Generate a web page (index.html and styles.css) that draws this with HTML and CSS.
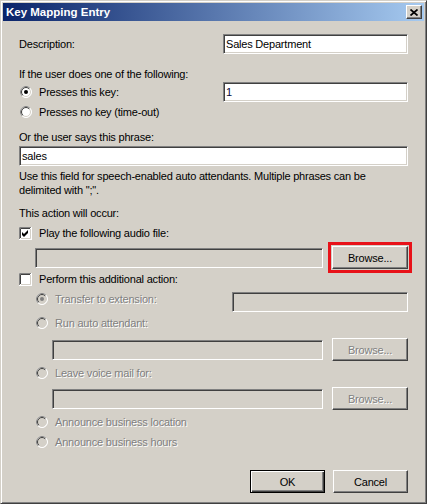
FILE: index.html
```html
<!DOCTYPE html>
<html>
<head>
<meta charset="utf-8">
<link rel="stylesheet" href="styles.css">
</head>
<body>
<div class="window">
  <div class="titlebar">
    <span class="title">Key Mapping Entry</span>
    <div class="close">
      <svg width="8" height="7" viewBox="0 0 8 7"><path d="M0.5 0.5 L7.5 6.5 M7.5 0.5 L0.5 6.5" stroke="#000" stroke-width="1.7" fill="none"/></svg>
    </div>
  </div>
  <div class="content">
    <div class="row r-desc">
      <span class="label">Description:</span>
      <div class="field f-desc">Sales Department</div>
    </div>
    <div class="row r-text r-if"><span class="label">If the user does one of the following:</span></div>
    <div class="row r-key">
      <span class="opt">
        <svg class="radio" width="12" height="12" viewBox="0 0 12 12"><circle cx="6" cy="6" r="5.5" fill="#fff" stroke="#fff"/><path d="M2.1 9.9 A5.5 5.5 0 0 1 9.9 2.1" stroke="#808080" fill="none"/><circle cx="6" cy="6" r="4.5" fill="#fff" stroke="#d4d0c8"/><path d="M2.8 9.2 A4.5 4.5 0 0 1 9.2 2.8" stroke="#404040" fill="none"/><circle cx="6" cy="6" r="2" fill="#000"/></svg>
        <span class="label">Presses this key:</span>
      </span>
      <div class="field f-key">1</div>
    </div>
    <div class="row r-nokey">
      <span class="opt">
        <svg class="radio" width="12" height="12" viewBox="0 0 12 12"><circle cx="6" cy="6" r="5.5" fill="#fff" stroke="#fff"/><path d="M2.1 9.9 A5.5 5.5 0 0 1 9.9 2.1" stroke="#808080" fill="none"/><circle cx="6" cy="6" r="4.5" fill="#fff" stroke="#d4d0c8"/><path d="M2.8 9.2 A4.5 4.5 0 0 1 9.2 2.8" stroke="#404040" fill="none"/></svg>
        <span class="label">Presses no key (time-out)</span>
      </span>
    </div>
    <div class="row r-text r-says"><span class="label">Or the user says this phrase:</span></div>
    <div class="row r-sales"><div class="field f-sales">sales</div></div>
    <div class="help">Use this field for speech-enabled auto attendants. Multiple phrases can be<br>delimited with ";".</div>
    <div class="row r-text r-action"><span class="label">This action will occur:</span></div>
    <div class="row r-text r-play">
      <span class="opt">
        <svg class="check" width="13" height="13" viewBox="0 0 13 13"><rect x="0" y="0" width="13" height="13" fill="#fff"/><path d="M0.5 12 V0.5 H12" stroke="#808080" fill="none"/><path d="M1.5 11 V1.5 H11" stroke="#404040" fill="none"/><path d="M1 12.5 H12.5 V1" stroke="#fff" fill="none"/><path d="M2 11.5 H11.5 V2" stroke="#d4d0c8" fill="none"/><polygon points="3,5 5,7 9,3 9,6 5,10 3,8" fill="#000"/></svg>
        <span class="label">Play the following audio file:</span>
      </span>
    </div>
    <div class="row r-audio">
      <div class="field dis f-audio"></div>
      <div class="highlight"><div class="btn b-browse">Browse...</div></div>
    </div>
    <div class="row r-text r-perform">
      <span class="opt">
        <svg class="check" width="13" height="13" viewBox="0 0 13 13"><rect x="0" y="0" width="13" height="13" fill="#fff"/><path d="M0.5 12 V0.5 H12" stroke="#808080" fill="none"/><path d="M1.5 11 V1.5 H11" stroke="#404040" fill="none"/><path d="M1 12.5 H12.5 V1" stroke="#fff" fill="none"/><path d="M2 11.5 H11.5 V2" stroke="#d4d0c8" fill="none"/></svg>
        <span class="label">Perform this additional action:</span>
      </span>
    </div>
    <div class="row r-transfer">
      <span class="opt">
        <svg class="radio" width="12" height="12" viewBox="0 0 12 12"><circle cx="6" cy="6" r="5.5" fill="#fff" stroke="#fff"/><path d="M2.1 9.9 A5.5 5.5 0 0 1 9.9 2.1" stroke="#808080" fill="none"/><circle cx="6" cy="6" r="4.5" fill="#d4d0c8" stroke="#d4d0c8"/><path d="M2.8 9.2 A4.5 4.5 0 0 1 9.2 2.8" stroke="#404040" fill="none"/><circle cx="6" cy="6" r="2" fill="#808080"/></svg>
        <span class="label dim">Transfer to extension:</span>
      </span>
      <div class="field dis f-transfer"></div>
    </div>
    <div class="row r-text r-runaa">
      <span class="opt">
        <svg class="radio" width="12" height="12" viewBox="0 0 12 12"><circle cx="6" cy="6" r="5.5" fill="#fff" stroke="#fff"/><path d="M2.1 9.9 A5.5 5.5 0 0 1 9.9 2.1" stroke="#808080" fill="none"/><circle cx="6" cy="6" r="4.5" fill="#d4d0c8" stroke="#d4d0c8"/><path d="M2.8 9.2 A4.5 4.5 0 0 1 9.2 2.8" stroke="#404040" fill="none"/></svg>
        <span class="label dim">Run auto attendant:</span>
      </span>
    </div>
    <div class="row r-browse r-aa">
      <div class="field dis f-sub"></div>
      <div class="btn b-sub dim">Browse...</div>
    </div>
    <div class="row r-text r-vm">
      <span class="opt">
        <svg class="radio" width="12" height="12" viewBox="0 0 12 12"><circle cx="6" cy="6" r="5.5" fill="#fff" stroke="#fff"/><path d="M2.1 9.9 A5.5 5.5 0 0 1 9.9 2.1" stroke="#808080" fill="none"/><circle cx="6" cy="6" r="4.5" fill="#d4d0c8" stroke="#d4d0c8"/><path d="M2.8 9.2 A4.5 4.5 0 0 1 9.2 2.8" stroke="#404040" fill="none"/></svg>
        <span class="label dim">Leave voice mail for:</span>
      </span>
    </div>
    <div class="row r-browse r-vmin">
      <div class="field dis f-sub"></div>
      <div class="btn b-sub dim">Browse...</div>
    </div>
    <div class="row r-text r-loc">
      <span class="opt">
        <svg class="radio" width="12" height="12" viewBox="0 0 12 12"><circle cx="6" cy="6" r="5.5" fill="#fff" stroke="#fff"/><path d="M2.1 9.9 A5.5 5.5 0 0 1 9.9 2.1" stroke="#808080" fill="none"/><circle cx="6" cy="6" r="4.5" fill="#d4d0c8" stroke="#d4d0c8"/><path d="M2.8 9.2 A4.5 4.5 0 0 1 9.2 2.8" stroke="#404040" fill="none"/></svg>
        <span class="label dim">Announce business location</span>
      </span>
    </div>
    <div class="row r-text r-hours">
      <span class="opt">
        <svg class="radio" width="12" height="12" viewBox="0 0 12 12"><circle cx="6" cy="6" r="5.5" fill="#fff" stroke="#fff"/><path d="M2.1 9.9 A5.5 5.5 0 0 1 9.9 2.1" stroke="#808080" fill="none"/><circle cx="6" cy="6" r="4.5" fill="#d4d0c8" stroke="#d4d0c8"/><path d="M2.8 9.2 A4.5 4.5 0 0 1 9.2 2.8" stroke="#404040" fill="none"/></svg>
        <span class="label dim">Announce business hours</span>
      </span>
    </div>
    <div class="row r-buttons">
      <div class="btn b-ok">OK</div>
      <div class="btn b-cancel">Cancel</div>
    </div>
  </div>
</div>
</body>
</html>
```
FILE: styles.css
```css
html, body {
  margin: 0;
  padding: 0;
  background: #d4d0c8;
}
body {
  font-family: "Liberation Sans", Arial, sans-serif;
  font-size: 11px;
  letter-spacing: -0.2px;
  color: #000;
}
.window {
  width: 427px;
  height: 504px;
  box-sizing: border-box;
  background: #d4d0c8;
  border: 1px solid;
  border-color: #d4d0c8 #404040 #404040 #d4d0c8;
  box-shadow: inset 1px 1px #fff, inset -1px -1px #808080;
  padding: 2px;
  display: flex;
  flex-direction: column;
}
.titlebar {
  height: 18px;
  flex: none;
  background: linear-gradient(to right, #0a246a, #a6caf0);
  display: flex;
  align-items: center;
  padding: 0 2px 0 3px;
}
.title {
  flex: 1;
  color: #fff;
  font-weight: bold;
  font-size: 11.5px;
  letter-spacing: 0;
}
.close {
  width: 16px;
  height: 14px;
  box-sizing: border-box;
  background: #d4d0c8;
  border: 1px solid;
  border-color: #fff #404040 #404040 #fff;
  box-shadow: inset -1px -1px #808080;
  display: flex;
  align-items: center;
  justify-content: center;
}
.close svg { display: block; }
.content {
  display: flex;
  flex-direction: column;
  padding: 0 16px;
}
.row {
  display: flex;
  align-items: center;
  flex: none;
}
.r-text { height: 14px; line-height: 14px; }
.label { white-space: nowrap; line-height: 14px; }
.dim {
  color: #808080;
  text-shadow: 1px 1px 0 #fff;
}
.opt {
  display: flex;
  align-items: center;
}
.radio { display: block; flex: none; margin: 0 7px 0 1px; }
.check { display: block; flex: none; margin: 0 7px 0 0; }

.field {
  box-sizing: border-box;
  height: 20px;
  flex: none;
  background: #fff;
  border: 1px solid;
  border-color: #808080 #fff #fff #808080;
  box-shadow: inset 1px 1px #404040, inset -1px -1px #d4d0c8;
  padding: 0 2px;
  line-height: 18px;
  white-space: nowrap;
}
.field.dis { background: #d4d0c8; }

.r-desc { margin-top: 13px; height: 20px; }
.f-desc { width: 185px; margin-left: auto; }
.r-if { margin-top: 13px; }
.r-key { margin-top: 1px; height: 20px; }
.f-key { width: 185px; margin-left: auto; color: #0a0a3a; }
.r-nokey { height: 20px; }
.r-says { margin-top: 8px; }
.r-sales { margin-top: 2px; height: 20px; }
.f-sales { width: 389px; }
.help {
  margin-top: 3px;
  line-height: 14px;
  white-space: nowrap;
}
.r-action { margin-top: 9px; }
.r-play { margin-top: 6px; }
.r-audio {
  margin-top: 2px;
  height: 30px;
  align-items: flex-start;
  padding-left: 16px;
}
.f-audio { width: 288px; margin-top: 6px; }
.highlight {
  flex: none;
  margin-left: 5px;
  border: 3px solid #e81219;
  padding: 1px;
}
.r-perform { margin-top: 0; }
.r-transfer {
  margin-top: 6px;
  height: 20px;
  align-items: flex-start;
  padding-left: 16px;
}
.f-transfer { width: 176px; margin-left: auto; }
.r-runaa { margin-top: 4px; padding-left: 16px; }
.r-browse { height: 23px; padding-left: 33px; }
.r-aa { margin-top: 8px; }
.r-vm { margin-top: 5px; padding-left: 16px; }
.r-vmin { margin-top: 7px; }
.r-loc { margin-top: 5px; padding-left: 16px; }
.r-hours { margin-top: 6px; padding-left: 16px; }
.f-sub { width: 271px; }

.btn {
  box-sizing: border-box;
  flex: none;
  height: 23px;
  background: #d4d0c8;
  border: 1px solid;
  border-color: #fff #404040 #404040 #fff;
  box-shadow: inset -1px -1px #808080;
  display: flex;
  align-items: center;
  justify-content: center;
  white-space: nowrap;
}
.b-browse { width: 76px; }
.b-sub { width: 76px; margin-left: 9px; }
.r-buttons {
  margin-top: 21px;
  height: 23px;
  justify-content: flex-end;
  gap: 8px;
}
.b-ok {
  width: 75px;
  border: 1px solid #000;
  box-shadow: inset 1px 1px #fff, inset -1px -1px #404040, inset -2px -2px #808080;
}
.b-cancel { width: 75px; }
```
